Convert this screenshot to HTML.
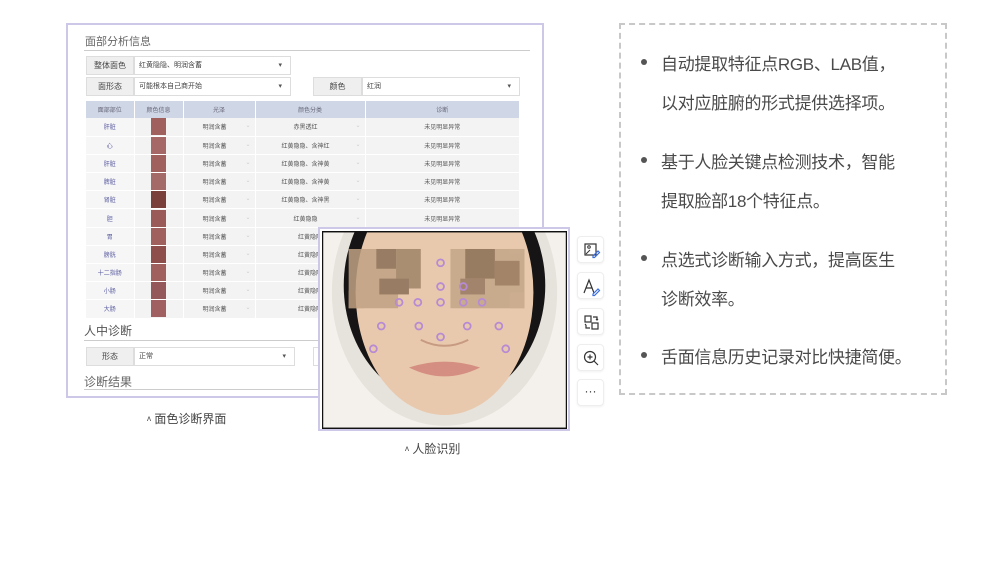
<!DOCTYPE html>
<html><head><meta charset="utf-8"><style>
*{margin:0;padding:0;box-sizing:border-box}
body{width:1006px;height:561px;background:#fff;position:relative;overflow:hidden;font-family:"Liberation Sans","Noto Sans CJK SC",sans-serif}
.a{position:absolute}
.lp{left:66px;top:23px;width:478px;height:375px;border:2px solid #cdc8e8;background:#fff}
.t{font-size:11px;color:#666}
.lbl{background:#efefef;border:1px solid #ddd;font-size:8px;color:#444;text-align:center;line-height:17px}
.sel{background:#fff;border:1px solid #ddd;font-size:7px;color:#444;line-height:17px;padding-left:4px}
.sel:after{content:"▾";position:absolute;right:8px;font-size:7px;color:#555}
table{border-collapse:collapse;font-size:6px;color:#555;text-align:center}
td{height:18.2px;border-bottom:1px solid #fff;border-right:1px solid #fff;background:#f3f3f3}
th{height:17px;background:#cfd6e6;font-weight:normal;color:#667;border-right:1px solid #fff}
td.n{color:#5a5ca0;background:#f6f6f6}
.sw{display:inline-block;width:15px;height:17px;background:#a0605e;vertical-align:middle}
.v{color:#ccc;float:right;margin-right:4px}
.cap{font-size:12px;color:#444}
.rb{left:619px;top:23px;width:328px;height:372px;border:2px dashed #c8c8c8}
.li{position:absolute;left:661px;font-size:17px;color:#4a4a4a;white-space:nowrap;letter-spacing:-0.3px;font-family:"Liberation Sans","Noto Sans CJK SC",sans-serif}
.dot{position:absolute;left:641px;width:6px;height:6px;border-radius:50%;background:#555}
.tb{position:absolute;left:577px;width:27px;height:27px;border:1px solid #eee;border-radius:4px;background:#fff;box-shadow:0 1px 2px rgba(0,0,0,.06)}
</style></head><body>
<div class="a lp"></div>
<div class="a t" style="left:85px;top:33px">面部分析信息</div>
<div class="a" style="left:84px;top:50px;width:446px;height:1px;background:#ccc"></div>
<div class="a lbl" style="left:86px;top:56px;width:48px;height:19px">整体面色</div>
<div class="a sel" style="left:134px;top:56px;width:157px;height:19px">红黄隐隐、明润含蓄</div>
<div class="a lbl" style="left:86px;top:77px;width:48px;height:19px">面形态</div>
<div class="a sel" style="left:134px;top:77px;width:157px;height:19px">可能根本自己商开始</div>
<div class="a lbl" style="left:313px;top:77px;width:49px;height:19px">颜色</div>
<div class="a sel" style="left:362px;top:77px;width:158px;height:19px">红润</div>
<table class="a" style="left:86px;top:101px;width:434px">
<tr><th style="width:48px">面部部位</th><th style="width:49px">颜色信息</th><th style="width:72px">光泽</th><th style="width:110px">颜色分类</th><th>诊断</th></tr>
<tr><td class="n">肝脏</td><td><span class="sw"></span></td><td>明润含蓄<span class="v">⌄</span></td><td>赤黑透红<span class="v">⌄</span></td><td>未见明显异常</td></tr>
<tr><td class="n">心</td><td><span class="sw" style="background:#a56866"></span></td><td>明润含蓄<span class="v">⌄</span></td><td>红黄隐隐、含神红<span class="v">⌄</span></td><td>未见明显异常</td></tr>
<tr><td class="n">肝脏</td><td><span class="sw"></span></td><td>明润含蓄<span class="v">⌄</span></td><td>红黄隐隐、含神黄<span class="v">⌄</span></td><td>未见明显异常</td></tr>
<tr><td class="n">脾脏</td><td><span class="sw" style="background:#a46a68"></span></td><td>明润含蓄<span class="v">⌄</span></td><td>红黄隐隐、含神黄<span class="v">⌄</span></td><td>未见明显异常</td></tr>
<tr><td class="n">肾脏</td><td><span class="sw" style="background:#7a3f3a"></span></td><td>明润含蓄<span class="v">⌄</span></td><td>红黄隐隐、含神黑<span class="v">⌄</span></td><td>未见明显异常</td></tr>
<tr><td class="n">胆</td><td><span class="sw" style="background:#9a5a58"></span></td><td>明润含蓄<span class="v">⌄</span></td><td>红黄隐隐<span class="v">⌄</span></td><td>未见明显异常</td></tr>
<tr><td class="n">胃</td><td><span class="sw"></span></td><td>明润含蓄<span class="v">⌄</span></td><td>红黄隐隐</td><td></td></tr>
<tr><td class="n">膀胱</td><td><span class="sw" style="background:#8e4e4c"></span></td><td>明润含蓄<span class="v">⌄</span></td><td>红黄隐隐</td><td></td></tr>
<tr><td class="n">十二指肠</td><td><span class="sw"></span></td><td>明润含蓄<span class="v">⌄</span></td><td>红黄隐隐</td><td></td></tr>
<tr><td class="n">小肠</td><td><span class="sw" style="background:#95585a"></span></td><td>明润含蓄<span class="v">⌄</span></td><td>红黄隐隐</td><td></td></tr>
<tr><td class="n">大肠</td><td><span class="sw" style="background:#a06062"></span></td><td>明润含蓄<span class="v">⌄</span></td><td>红黄隐隐</td><td></td></tr>
</table>
<div class="a" style="left:84px;top:322px;font-size:12px;color:#555">人中诊断</div>
<div class="a" style="left:84px;top:340px;width:240px;height:1px;background:#ccc"></div>
<div class="a lbl" style="left:86px;top:347px;width:48px;height:19px">形态</div>
<div class="a sel" style="left:134px;top:347px;width:161px;height:19px">正常</div>
<div class="a" style="left:313px;top:347px;width:10px;height:19px;border:1px solid #ddd"></div>
<div class="a" style="left:84px;top:373px;font-size:12px;color:#666">诊断结果</div>
<div class="a" style="left:84px;top:389px;width:240px;height:1px;background:#ccc"></div>
<div class="a cap" style="left:147px;top:410px"><span style="font-size:8px;vertical-align:2px">ᴧ</span> 面色诊断界面</div>

<div class="a" style="left:318px;top:227px;width:252px;height:204px;border:2px solid #cdc8e8;background:#fff"></div>
<svg class="a" style="left:322px;top:231px" width="245" height="198" viewBox="0 0 248 200">
<rect width="248" height="200" fill="#f4f1ec"/>
<ellipse cx="124" cy="62" rx="114" ry="135" fill="#e6e2dc"/>
<ellipse cx="124" cy="55" rx="102" ry="120" fill="#161414"/>
<ellipse cx="124" cy="62" rx="90" ry="124" fill="#e9c9ad"/>
<g opacity=".85">
<rect x="27" y="18" width="50" height="60" fill="#c0a283"/>
<rect x="55" y="18" width="20" height="20" fill="#8a7058"/>
<rect x="75" y="18" width="25" height="40" fill="#a08468"/>
<rect x="58" y="48" width="30" height="16" fill="#8a7058"/>
<rect x="27" y="60" width="15" height="18" fill="#c2a283"/>
<rect x="130" y="18" width="75" height="60" fill="#c3a688"/>
<rect x="145" y="18" width="30" height="30" fill="#8a6f56"/>
<rect x="175" y="30" width="25" height="25" fill="#98795e"/>
<rect x="140" y="48" width="25" height="16" fill="#957860"/>
<rect x="190" y="62" width="15" height="16" fill="#c7a98b"/>
</g>
<path d="M88 138 Q124 126 160 138 Q124 156 88 138Z" fill="#d48f82"/>
<path d="M100 110 Q124 122 148 110" stroke="#c79a82" fill="none" stroke-width="2"/>
<g fill="none" stroke="#b78ad4" stroke-width="1.8">
<circle cx="120" cy="32" r="3.5"/><circle cx="120" cy="56" r="3.5"/><circle cx="143" cy="56" r="3.5"/>
<circle cx="78" cy="72" r="3.5"/><circle cx="97" cy="72" r="3.5"/><circle cx="120" cy="72" r="3.5"/><circle cx="143" cy="72" r="3.5"/><circle cx="162" cy="72" r="3.5"/>
<circle cx="60" cy="96" r="3.5"/><circle cx="98" cy="96" r="3.5"/><circle cx="147" cy="96" r="3.5"/><circle cx="179" cy="96" r="3.5"/>
<circle cx="120" cy="107" r="3.5"/><circle cx="52" cy="119" r="3.5"/><circle cx="186" cy="119" r="3.5"/>
</g>
<rect x="0.5" y="0.5" width="247" height="199" fill="none" stroke="#111" stroke-width="1.5"/>
</svg>
<div class="a cap" style="left:405px;top:440px"><span style="font-size:8px;vertical-align:2px">ᴧ</span> 人脸识别</div>

<div class="tb" style="top:236px"><svg width="27" height="27"><rect x="7" y="7" width="11" height="11" fill="none" stroke="#333" stroke-width="1.2"/><circle cx="11" cy="10" r="1.3" fill="none" stroke="#333"/><path d="M8 17l4-4" stroke="#333"/><path d="M15 19l5-5 1.5 1.5-5 5h-1.5z" fill="none" stroke="#3b6fe0" stroke-width="1.2"/></svg></div>
<div class="tb" style="top:272px"><svg width="27" height="27"><path d="M6 20L11 7 16 20M8 15h6" fill="none" stroke="#333" stroke-width="1.2"/><path d="M15 21l5-5 1.5 1.5-5 5h-1.5z" fill="none" stroke="#3b6fe0" stroke-width="1.2"/></svg></div>
<div class="tb" style="top:308px"><svg width="27" height="27" fill="none" stroke="#333" stroke-width="1.2"><rect x="7" y="7" width="6" height="6"/><rect x="14" y="14" width="6" height="6"/><path d="M15 8h4v3M18 10l1 1 1-1M12 19H8v-3M8 15l-1 1"/></svg></div>
<div class="tb" style="top:344px"><svg width="27" height="27" fill="none" stroke="#333" stroke-width="1.2"><circle cx="12" cy="12" r="5.5"/><path d="M16 16l4 4M12 9.5v5M9.5 12h5"/></svg></div>
<div class="tb" style="top:379px;text-align:center;font-size:12px;line-height:22px;color:#333">···</div>

<div class="a rb"></div>
<div class="dot" style="top:59px"></div><div class="li" style="top:50px">自动提取特征点RGB、LAB值，</div>
<div class="li" style="top:89px">以对应脏腑的形式提供选择项。</div>
<div class="dot" style="top:157px"></div><div class="li" style="top:148px">基于人脸关键点检测技术，智能</div>
<div class="li" style="top:187px">提取脸部18个特征点。</div>
<div class="dot" style="top:255px"></div><div class="li" style="top:246px">点选式诊断输入方式，提高医生</div>
<div class="li" style="top:285px">诊断效率。</div>
<div class="dot" style="top:352px"></div><div class="li" style="top:343px">舌面信息历史记录对比快捷简便。</div>
</body></html>
